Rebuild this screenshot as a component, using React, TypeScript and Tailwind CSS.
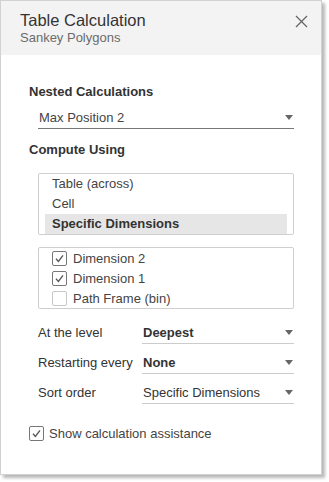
import React from 'react';

function Caret() {
  return (
    <svg width="8" height="5" viewBox="0 0 8 5" className="shrink-0">
      <path d="M0 0 H8 L4 5 Z" fill="#666" />
    </svg>
  );
}

function CheckBox({ checked, className = '' }: { checked: boolean; className?: string }) {
  return (
    <span
      className={`flex h-[15px] w-[15px] shrink-0 items-center justify-center rounded-[2px] border ${
        checked ? 'border-[#777]' : 'border-[#c8c8c8]'
      } bg-white ${className}`}
    >
      {checked && (
        <svg width="11" height="11" viewBox="0 0 11 11">
          <path d="M2 5.8 L4.4 8.4 L9 2.4" fill="none" stroke="#555" strokeWidth="1.3" />
        </svg>
      )}
    </span>
  );
}

interface SelectRowProps {
  label: string;
  value: string;
  bold?: boolean;
}

function SelectRow({ label, value, bold }: SelectRowProps) {
  return (
    <div className="flex h-[25px] items-start">
      <span className="w-[104px] pt-[5px] text-[13px] leading-[18px] text-[#333]">{label}</span>
      <div className="flex h-[25px] w-[152px] items-center justify-between border-b border-[#cccccc] pl-[1px] pr-[1px] pt-[3px]">
        <span className={`text-[13px] leading-[18px] text-[#333] ${bold ? 'font-bold' : ''}`}>{value}</span>
        <Caret />
      </div>
    </div>
  );
}

export default function App() {
  const dims = [
    { name: 'Dimension 2', checked: true },
    { name: 'Dimension 1', checked: true },
    { name: 'Path Frame (bin)', checked: false },
  ];

  return (
    <div className="h-[482px] w-[329px] bg-white font-['Liberation_Sans',Arial,sans-serif]">
      <div className="h-[475px] w-[322px] border border-[#d2d2d2] bg-white shadow-[3px_3px_3px_rgba(0,0,0,0.28)]">
        <div className="flex h-[54px] justify-between bg-[#f3f3f3] pl-[19px] pr-[13px] pt-[9px]">
          <div>
            <div className="text-[16.5px] leading-[20px] text-[#333]">Table Calculation</div>
            <div className="text-[13px] leading-[16px] text-[#6b6b6b]">Sankey Polygons</div>
          </div>
          <svg width="13" height="13" viewBox="0 0 13 13" className="mt-[5px]">
            <path d="M1 1 L12 12 M12 1 L1 12" stroke="#666" strokeWidth="1.3" />
          </svg>
        </div>

        <div className="pl-[28px]">
          <div className="mt-[28px] text-[13px] font-bold leading-[18px] text-[#333]">Nested Calculations</div>
          <div className="ml-[9px] mt-[3px] flex h-[25px] w-[256px] items-center justify-between border-b border-[#777] pl-[1px] pr-[1px] pt-[3px]">
            <span className="text-[13px] leading-[18px] text-[#444]">Max Position 2</span>
            <Caret />
          </div>

          <div className="mt-[12px] text-[13px] font-bold leading-[18px] text-[#333]">Compute Using</div>

          <div className="ml-[9px] mt-[14px] w-[256px] rounded-[2px] border border-[#cfcfcf] px-[6px]">
            <div className="h-[20px] pl-[7px] text-[13px] leading-[20px] text-[#444]">Table (across)</div>
            <div className="h-[20px] pl-[7px] text-[13px] leading-[20px] text-[#444]">Cell</div>
            <div className="h-[20px] bg-[#e6e6e6] pl-[7px] text-[13px] font-bold leading-[20px] text-[#333]">
              Specific Dimensions
            </div>
          </div>

          <div className="ml-[9px] mt-[12px] w-[256px] rounded-[2px] border border-[#cfcfcf] pl-[13px]">
            {dims.map((d) => (
              <div key={d.name} className="flex h-[20px] items-center gap-[6px] pt-[1px]">
                <CheckBox checked={d.checked} />
                <span className="text-[13px] leading-[18px] text-[#444]">{d.name}</span>
              </div>
            ))}
          </div>

          <div className="ml-[9px] mt-[10px] flex w-[256px] flex-col gap-[5px]">
            <SelectRow label="At the level" value="Deepest" bold />
            <SelectRow label="Restarting every" value="None" bold />
            <SelectRow label="Sort order" value="Specific Dimensions" />
          </div>

          <div className="mt-[19px] flex h-[20px] items-center gap-[5px] pt-[1px]">
            <CheckBox checked />
            <span className="text-[13px] leading-[18px] text-[#444]">Show calculation assistance</span>
          </div>
        </div>
      </div>
    </div>
  );
}
